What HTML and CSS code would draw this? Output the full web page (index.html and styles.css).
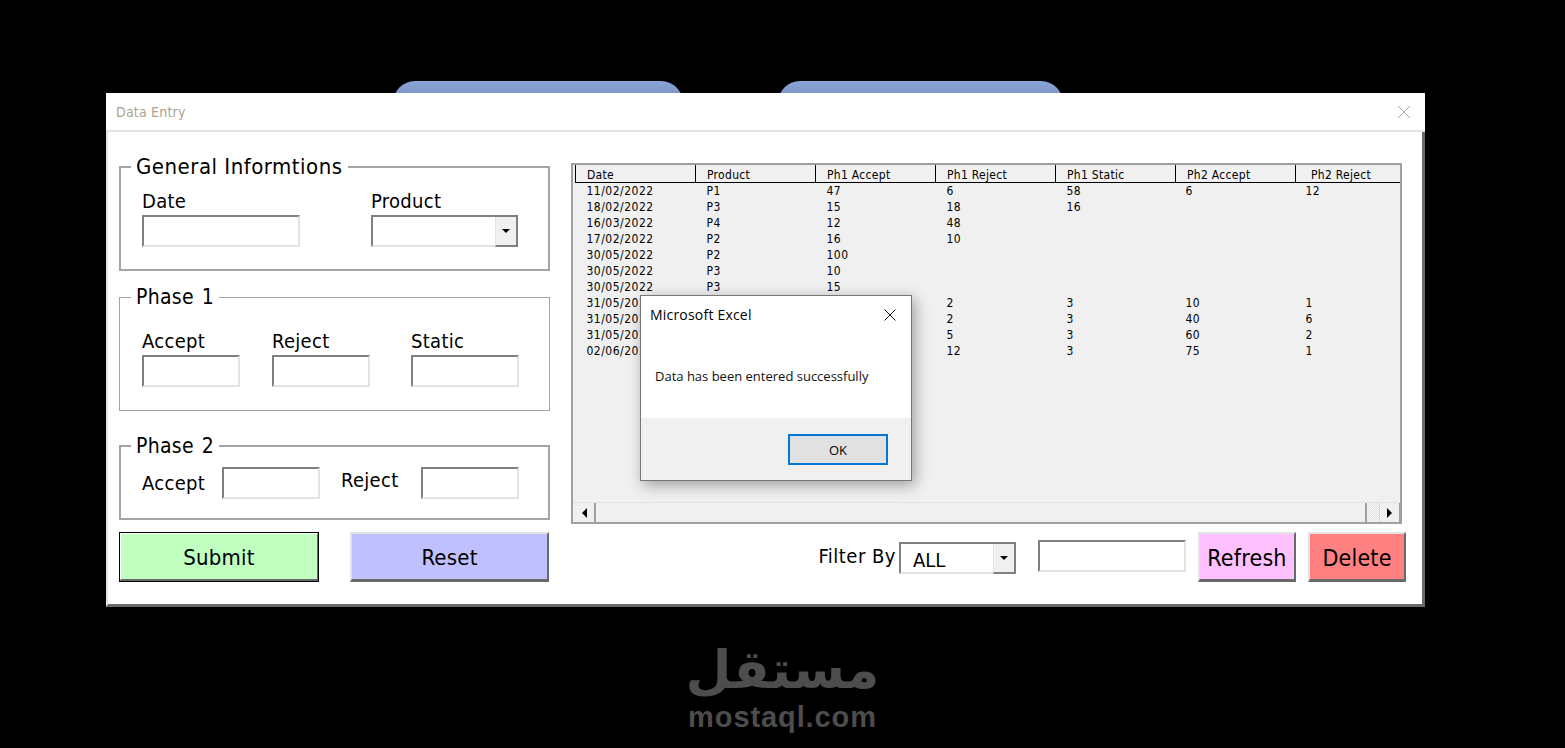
FILE: index.html
```html
<!DOCTYPE html>
<html>
<head>
    <meta charset="UTF-8">
    <title>Data Entry</title>
    <link rel="stylesheet" href="styles.css">
</head>
<body>
<div class="tabs">
    <div class="tab tab-a"></div>
    <div class="tab tab-b"></div>
</div>
<div class="window">
    <div class="titlebar">
        <span class="title">Data Entry</span>
        <svg class="close" width="14" height="14" viewBox="0 0 14 14"><path d="M1 1L13 13M13 1L1 13" stroke="#a8a8a8" stroke-width="1" fill="none"/></svg>
    </div>
    <div class="content">
        <div class="left">
            <fieldset class="group group-info">
                <legend>General Informtions</legend>
                <div class="row row-info">
                    <div class="field date-field">
                        <label>Date</label>
                        <div class="input"></div>
                    </div>
                    <div class="field">
                        <label>Product</label>
                        <div class="input combo product-combo">
                            <span class="combo-btn"><i class="arrow-down"></i></span>
                        </div>
                    </div>
                </div>
            </fieldset>
            <fieldset class="group group-one">
                <legend>Phase 1</legend>
                <div class="row row-one">
                    <div class="field">
                        <label>Accept</label>
                        <div class="input w98"></div>
                    </div>
                    <div class="field">
                        <label>Reject</label>
                        <div class="input w98"></div>
                    </div>
                    <div class="field">
                        <label>Static</label>
                        <div class="input w108"></div>
                    </div>
                </div>
            </fieldset>
            <fieldset class="group group-two">
                <legend>Phase 2</legend>
                <div class="row row-two">
                    <label class="accept-label">Accept</label>
                    <div class="input w98"></div>
                    <label class="reject-label">Reject</label>
                    <div class="input w98"></div>
                </div>
            </fieldset>
            <div class="actions">
                <button class="btn btn-submit">Submit</button>
                <button class="btn btn-reset">Reset</button>
            </div>
        </div>
        <div class="right">
            <div class="listbox">
                <div class="list-area">
                    <table class="grid">
                        <thead>
                            <tr><th>Date</th><th>Product</th><th>Ph1 Accept</th><th>Ph1 Reject</th><th>Ph1 Static</th><th>Ph2 Accept</th><th class="last">Ph2 Reject</th></tr>
                        </thead>
                        <tbody>
                            <tr><td>11/02/2022</td><td>P1</td><td>47</td><td>6</td><td>58</td><td>6</td><td>12</td></tr>
                            <tr><td>18/02/2022</td><td>P3</td><td>15</td><td>18</td><td>16</td><td></td><td></td></tr>
                            <tr><td>16/03/2022</td><td>P4</td><td>12</td><td>48</td><td></td><td></td><td></td></tr>
                            <tr><td>17/02/2022</td><td>P2</td><td>16</td><td>10</td><td></td><td></td><td></td></tr>
                            <tr><td>30/05/2022</td><td>P2</td><td>100</td><td></td><td></td><td></td><td></td></tr>
                            <tr><td>30/05/2022</td><td>P3</td><td>10</td><td></td><td></td><td></td><td></td></tr>
                            <tr><td>30/05/2022</td><td>P3</td><td>15</td><td></td><td></td><td></td><td></td></tr>
                            <tr><td>31/05/2022</td><td></td><td></td><td>2</td><td>3</td><td>10</td><td>1</td></tr>
                            <tr><td>31/05/2022</td><td></td><td></td><td>2</td><td>3</td><td>40</td><td>6</td></tr>
                            <tr><td>31/05/2022</td><td></td><td></td><td>5</td><td>3</td><td>60</td><td>2</td></tr>
                            <tr><td>02/06/2022</td><td></td><td></td><td>12</td><td>3</td><td>75</td><td>1</td></tr>
                        </tbody>
                    </table>
                </div>
                <div class="scrollbar">
                    <span class="scroll-btn"><i class="arrow-left"></i></span>
                    <span class="scroll-track"></span>
                    <span class="scroll-rest"></span>
                    <span class="scroll-btn scroll-next"><i class="arrow-right"></i></span>
                </div>
            </div>
            <div class="filter">
                <span class="filter-label">Filter By</span>
                <div class="input combo filter-combo">
                    <span class="combo-value">ALL</span>
                    <span class="combo-btn"><i class="arrow-down"></i></span>
                </div>
                <div class="input filter-input"></div>
                <button class="btn btn-refresh">Refresh</button>
                <button class="btn btn-delete">Delete</button>
            </div>
        </div>
    </div>

    <!-- message box on top of the form -->
    <div class="dialog">
        <div class="dialog-head">
            <span>Microsoft Excel</span>
            <svg width="12" height="12" viewBox="0 0 12 12"><path d="M0.5 0.5L11.5 11.5M11.5 0.5L0.5 11.5" stroke="#1a1a1a" stroke-width="1" fill="none"/></svg>
        </div>
        <div class="dialog-msg">Data has been entered successfully</div>
        <div class="dialog-foot">
            <button class="ok">OK</button>
        </div>
    </div>
</div>
<div class="logo">
    <div class="logo-ar" lang="ar" dir="rtl">مستقل</div>
    <div class="logo-en">mostaql.com</div>
</div>
</body>
</html>
```

FILE: styles.css
```css
html,body{
    margin: 0;
    padding: 0;
    height: 100%;
    overflow: hidden;
}
body{
    background-color: #000;
    font-family: "DejaVu Sans", Tahoma, sans-serif;
    font-stretch: condensed;
    color: #000;
}
.tabs{
    display: flex;
    height: 12px;
    margin: 81px 0 0 393px;
    overflow: hidden;
}
.tab{
    height: 40px;
    border-radius: 22px 22px 0 0;
    background: linear-gradient(#8aa5d8, #7d98c8 12px);
}
.tab-a{
    width: 290px;
}
.tab-b{
    width: 285px;
    margin-left: 95px;
}

/* userform */
.window{
    position: relative;
    width: 1319px;
    height: 514px;
    margin-left: 106px;
    background-color: #fff;
    display: flex;
    flex-direction: column;
}
.titlebar{
    height: 37px;
    flex: none;
    display: flex;
    align-items: center;
    justify-content: space-between;
    padding: 0 14px 0 10px;
    border-bottom: 2px solid #e3e3e3;
}
.title{
    font-size: 14px;
    letter-spacing: 0.2px;
    color: #a9a38f;
}
.content{
    flex: 1;
    display: flex;
    gap: 21px;
    padding: 23px 0 0 11px;
    border-left: 2px solid #e3e3e3;
    border-right: 3px solid #696969;
    border-bottom: 3px solid #696969;
}
.left{
    width: 431px;
    flex: none;
}
.group{
    box-sizing: border-box;
    margin: 0;
    padding: 0 0 0 21px;
    border: 2px solid #a4a4a4;
    min-width: 0;
}
.group legend{
    margin-left: -11px;
    padding: 0 5px 0 5px;
    font-size: 21px;
    line-height: 24px;
    letter-spacing: 0.3px;
    word-spacing: 1.5px;
}
.group-info legend{
    font-size: 22px;
    letter-spacing: 0.5px;
    word-spacing: 0;
}
.group-info{
    height: 116px;
}
.group-one{
    height: 126px;
    margin-top: 14px;
    padding-left: 22px;
    border-width: 1px;
}
.group-two{
    height: 86px;
    margin-top: 23px;
}
.row{
    display: flex;
}
.row-info{
    gap: 71px;
    margin-top: 9px;
}
.row-one{
    gap: 32px;
    margin-top: 19px;
}
.row-one .field:nth-child(3){
    margin-left: 9px;
}
.row-two{
    align-items: center;
    margin-top: 9px;
}
.field{
    display: flex;
    flex-direction: column;
}
label{
    font-size: 20px;
    line-height: 27px;
    letter-spacing: 0.3px;
}
.accept-label{
    width: 80px;
}
.reject-label{
    margin: -6px 21px 0 21px;
    width: 59px;
}
.input{
    box-sizing: border-box;
    height: 32px;
    background-color: #fff;
    border-top: 2px solid #808080;
    border-left: 2px solid #808080;
    border-right: 2px solid #e3e3e3;
    border-bottom: 2px solid #e3e3e3;
}
.date-field .input{
    width: 158px;
}
.w98{
    width: 98px;
}
.w108{
    width: 108px;
}
.combo{
    display: flex;
    align-items: stretch;
    border-right: 0;
}
.product-combo{
    width: 147px;
}
.combo-btn{
    width: 20px;
    margin-left: auto;
    margin-bottom: -2px;
    display: flex;
    align-items: center;
    justify-content: center;
    background-color: #f0f0f0;
    border-right: 2px solid #808080;
    border-bottom: 2px solid #808080;
    border-left: 1px solid #e3e3e3;
}
.arrow-down{
    border-left: 4px solid transparent;
    border-right: 4px solid transparent;
    border-top: 4px solid #000;
}
.arrow-left{
    border-top: 5px solid transparent;
    border-bottom: 5px solid transparent;
    border-right: 5px solid #000;
}
.arrow-right{
    border-top: 5px solid transparent;
    border-bottom: 5px solid transparent;
    border-left: 5px solid #000;
}

/* buttons */
.actions{
    display: flex;
    justify-content: space-between;
    margin-top: 12px;
    padding-right: 1px;
}
.btn{
    box-sizing: border-box;
    height: 50px;
    padding: 2px 0 0 0;
    font-family: inherit;
    font-stretch: inherit;
    font-size: 22px;
    letter-spacing: 0.2px;
    color: #000;
    border-top: 2px solid #e3e3e3;
    border-left: 2px solid #e3e3e3;
    border-right: 2px solid #696969;
    border-bottom: 3px solid #696969;
}
.btn-submit{
    width: 200px;
    background-color: #c0ffc0;
    outline: 1px solid #000;
    outline-offset: -1px;
    border-top-color: #fff;
    border-left-color: #fff;
}
.btn-reset{
    width: 199px;
    background-color: #c0c0ff;
}
.btn-refresh{
    width: 98px;
    font-size: 23px;
    background-color: #ffc0ff;
}
.btn-delete{
    width: 98px;
    margin-left: 12px;
    font-size: 23px;
    background-color: #ff8080;
}

/* list */
.right{
    width: 835px;
    flex: none;
}
.listbox{
    box-sizing: border-box;
    width: 831px;
    height: 361px;
    margin-top: 8px;
    background-color: #f0f0f0;
    border: 2px solid #a0a0a0;
    display: flex;
    flex-direction: column;
}
.list-area{
    flex: 1;
    padding-left: 2px;
    overflow: hidden;
}
.grid{
    table-layout: fixed;
    width: 825px;
    border-collapse: collapse;
    font-size: 12px;
}
.grid th{
    box-sizing: border-box;
    height: 17px;
    width: 120px;
    padding: 4px 0 0 11px;
    text-align: left;
    font-weight: normal;
    line-height: 13px;
    letter-spacing: 0.3px;
    border-left: 1px solid #000;
    border-bottom: 1px solid #000;
}
.grid th.last{
    width: 105px;
    padding-left: 15px;
}
.grid td{
    height: 16px;
    padding: 0 0 0 11px;
    line-height: 16px;
    letter-spacing: 0.5px;
}
.grid td:nth-child(n+6){
    padding-left: 10px;
}
.scrollbar{
    flex: none;
    height: 20px;
    display: flex;
    padding: 0 0 0 2px;
    border-top: 1px solid #e3e3e3;
    background-color: #f0f0f0;
    box-sizing: border-box;
}
.scroll-btn{
    width: 19px;
    flex: none;
    display: flex;
    align-items: center;
    justify-content: center;
    background-color: #f0f0f0;
}
.scroll-next{
    border-left: 1px solid #d8d8d8;
    border-right: 1px solid #a0a0a0;
}
.scroll-track{
    flex: 1;
    border-left: 2px solid #a0a0a0;
    border-right: 2px solid #a0a0a0;
}
.scroll-rest{
    width: 12px;
    flex: none;
    background-color: #fff;
    background-image: repeating-conic-gradient(#dcdcdc 0 25%, #fff 0 50%);
    background-size: 2px 2px;
}

/* filter row */
.filter{
    display: flex;
    align-items: flex-start;
    justify-content: flex-end;
    margin-top: 8px;
    height: 50px;
}
.filter-label{
    font-size: 20px;
    line-height: 24px;
    letter-spacing: 0.5px;
    margin: 12px 3px 0 0;
}
.filter-combo{
    width: 117px;
    margin-top: 10px;
}
.combo-value{
    padding: 4px 0 0 12px;
    font-size: 20px;
    line-height: 24px;
}
.filter-input{
    width: 148px;
    margin: 8px 12px 0 22px;
}

/* message box */
.dialog{
    position: absolute;
    left: 534px;
    top: 202px;
    box-sizing: border-box;
    width: 272px;
    height: 186px;
    display: flex;
    flex-direction: column;
    background-color: #fff;
    border: 1px solid #777;
    box-shadow: 3px 4px 14px rgba(0,0,0,0.35);
    font-family: "Open Sans", "Noto Sans", sans-serif;
    font-stretch: normal;
}
.dialog-head{
    display: flex;
    align-items: center;
    justify-content: space-between;
    padding: 10px 15px 0 9px;
    font-size: 14px;
    line-height: 18px;
    letter-spacing: 0.2px;
}
.dialog-msg{
    flex: 1;
    padding: 44px 0 0 14px;
    font-size: 13px;
    line-height: 16px;
    color: #111;
}
.dialog-foot{
    flex: none;
    height: 62px;
    background-color: #f0f0f0;
    display: flex;
    justify-content: flex-end;
    align-items: flex-start;
    padding: 16px 23px 0 0;
    box-sizing: border-box;
}
.ok{
    box-sizing: border-box;
    width: 100px;
    height: 31px;
    padding: 0;
    background-color: #e1e1e1;
    border: 2px solid #0078d7;
    font-family: inherit;
    font-size: 13px;
    color: #000;
}

/* watermark */
.logo{
    margin-top: 32px;
    text-align: center;
    width: 1565px;
    color: #4d4d4d;
}
.logo-ar{
    font-family: "DejaVu Sans", sans-serif;
    font-stretch: normal;
    font-weight: bold;
    font-size: 53px;
    line-height: 62px;
}
.logo-en{
    font-family: "Liberation Sans", Arial, sans-serif;
    font-stretch: normal;
    font-weight: bold;
    font-size: 29px;
    line-height: 32px;
    letter-spacing: 0.9px;
}
```
